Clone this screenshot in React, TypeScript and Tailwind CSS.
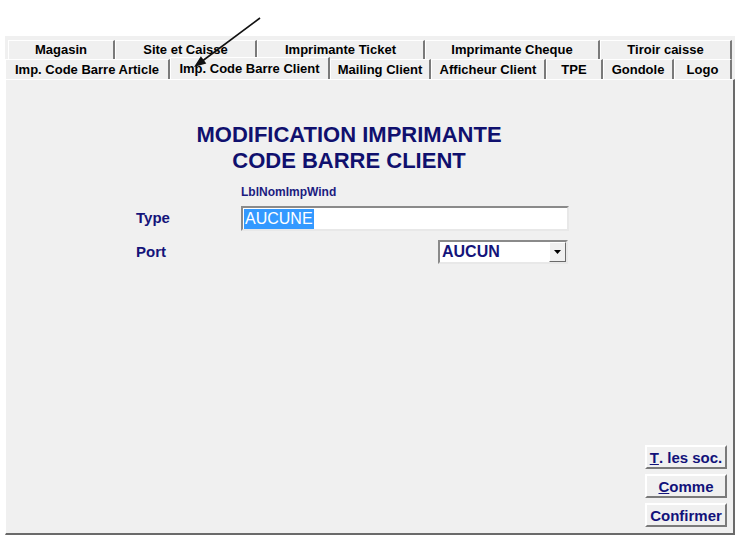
import React from "react";

const ROW1 = [
  { label: "Magasin", w: 107 },
  { label: "Site et Caisse", w: 142 },
  { label: "Imprimante Ticket", w: 168 },
  { label: "Imprimante Cheque", w: 175 },
  { label: "Tiroir caisse", w: 132 },
];

const ROW2 = [
  { label: "Imp. Code Barre Article", w: 165 },
  { label: "Imp. Code Barre Client", w: 160, active: true },
  { label: "Mailing Client", w: 101 },
  { label: "Afficheur Client", w: 115 },
  { label: "TPE", w: 57 },
  { label: "Gondole", w: 71 },
  { label: "Logo", w: 58 },
];

function Tab({ label, w, active }: { label: string; w: number; active?: boolean }) {
  return (
    <div
      style={{ width: w }}
      className={
        "flex items-center justify-center border-t border-l border-t-white border-l-white border-r-2 border-r-[#7a7a7a] bg-[#f0f0f0] text-[13px] font-bold text-black whitespace-nowrap " +
        (active ? "relative z-10 h-[22px] -mt-[2px]" : "h-full")
      }
    >
      {label}
    </div>
  );
}

function Button({ children }: { children: React.ReactNode }) {
  return (
    <button className="w-[82px] h-[24px] flex items-center justify-center bg-[#f0f0f0] border-2 border-t-white border-l-white border-b-[#7a7a7a] border-r-[#7a7a7a] text-[15px] font-bold text-[#12127a] leading-none">
      {children}
    </button>
  );
}

export default function App() {
  return (
    <div className="relative w-[742px] h-[545px] bg-white overflow-hidden font-['Liberation_Sans',Arial,sans-serif]">
      <div className="pt-[36px] pl-[5px]">
        <div className="w-[730px] h-[499px] bg-[#f0f0f0] flex flex-col">
          <div className="pt-[4px] pl-[3px] flex h-[23px]">
            {ROW1.map((t) => (
              <Tab key={t.label} {...t} />
            ))}
          </div>
          <div className="flex h-[20px]">
            {ROW2.map((t) => (
              <Tab key={t.label} {...t} />
            ))}
          </div>

          <div className="flex-1 flex flex-col border-t border-l border-t-white border-l-white border-r-2 border-b-2 border-r-[#6a6a6a] border-b-[#6a6a6a]">
            <div className="ml-[133px] mt-[42px] w-[420px] text-center text-[22px] leading-[26px] font-bold text-[#10106e]">
              <div>MODIFICATION IMPRIMANTE</div>
              <div>CODE BARRE CLIENT</div>
            </div>

            <div className="ml-[235px] mt-[11px] h-[14px] text-[12px] leading-[14px] font-bold text-[#1c1c80]">
              LblNomImpWind
            </div>

            <div className="ml-[130px] mt-[7px] flex items-center h-[25px]">
              <div className="w-[105px] text-[15px] font-bold text-[#14147a]">Type</div>
              <div className="w-[328px] h-[25px] bg-white border-2 border-t-[#8a8a8a] border-l-[#8a8a8a] border-b-[#e8e8e8] border-r-[#e8e8e8] flex items-center pl-[1px]">
                <span className="bg-[#3399ff] text-white text-[16px] leading-[20px] px-[1px]">AUCUNE</span>
              </div>
            </div>

            <div className="ml-[130px] mt-[9px] flex items-center h-[24px]">
              <div className="w-[105px] text-[15px] font-bold text-[#14147a]">Port</div>
              <div className="ml-[197px] w-[130px] h-[24px] bg-white border-2 border-t-[#8a8a8a] border-l-[#8a8a8a] border-b-[#e8e8e8] border-r-[#e8e8e8] flex items-center">
                <span className="flex-1 pl-[2px] text-[16px] font-bold text-[#14147a]">AUCUN</span>
                <div className="w-[17px] h-[20px] bg-[#f0f0f0] border border-t-white border-l-white border-b-[#6a6a6a] border-r-[#6a6a6a] flex items-center justify-center">
                  <svg width="7" height="4" viewBox="0 0 7 4">
                    <polygon points="0,0 7,0 3.5,4" fill="#000" />
                  </svg>
                </div>
              </div>
            </div>

            <div className="flex-1" />

            <div className="flex flex-col items-end gap-[5px] pr-[6px] pb-[6px]">
              <Button>
                <span className="underline">T</span>. les soc.
              </Button>
              <Button>
                <span className="underline">C</span>omme
              </Button>
              <Button>Confirmer</Button>
            </div>
          </div>
        </div>
      </div>

      <svg className="absolute inset-0 z-20 pointer-events-none" width="742" height="545">
        <line x1="260" y1="18" x2="201" y2="62" stroke="#111" strokeWidth="1.6" />
        <polygon points="194,67 206.3,63.4 200.9,56.2" fill="#111" />
      </svg>
    </div>
  );
}
